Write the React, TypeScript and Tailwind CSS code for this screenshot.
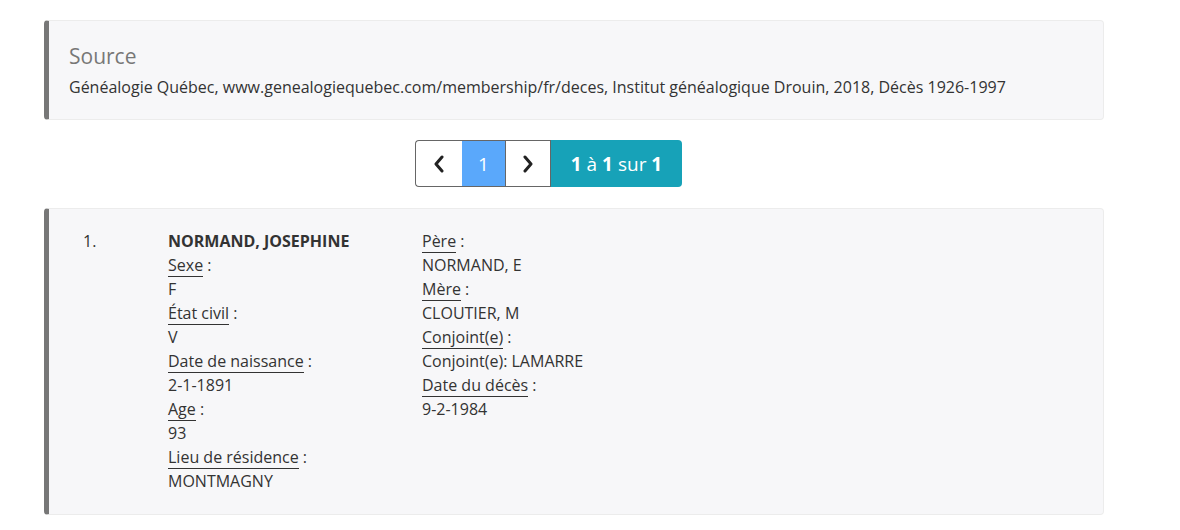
import React from "react";

const left = [
  { label: "Sexe", value: "F" },
  { label: "État civil", value: "V" },
  { label: "Date de naissance", value: "2-1-1891" },
  { label: "Age", value: "93" },
  { label: "Lieu de résidence", value: "MONTMAGNY" },
];

const right = [
  { label: "Père", value: "NORMAND, E" },
  { label: "Mère", value: "CLOUTIER, M" },
  { label: "Conjoint(e)", value: "Conjoint(e): LAMARRE" },
  { label: "Date du décès", value: "9-2-1984" },
];

function Field({ label, value }: { label: string; value: string }) {
  return (
    <>
      <div className="h-6">
        <span className="border-b border-[#333]">{label}</span> :
      </div>
      <div className="h-6">{value}</div>
    </>
  );
}

function Chevron({ dir }: { dir: "left" | "right" }) {
  return (
    <svg width="12" height="18" viewBox="0 0 12 18" fill="none">
      <path
        d={dir === "left" ? "M9 2 L3 9 L9 16" : "M3 2 L9 9 L3 16"}
        stroke="#222"
        strokeWidth="3"
        strokeLinecap="round"
        strokeLinejoin="round"
      />
    </svg>
  );
}

export default function App() {
  return (
    <div
      className="min-h-[530px] bg-white pt-5 text-[16px] leading-6 text-[#333]"
      style={{ fontFamily: '"Open Sans", sans-serif' }}
    >
      <div className="ml-[44px] w-[1060px] rounded border border-[#ececec] border-l-[5px] border-l-[#777] bg-[#f7f7f9] px-5 pt-[23px] pb-5">
        <h4 className="text-[21px] leading-[25px] text-[#777]">Source</h4>
        <p className="mt-1.5">
          Généalogie Québec, www.genealogiequebec.com/membership/fr/deces, Institut généalogique Drouin, 2018, Décès 1926-1997
        </p>
      </div>

      <div className="mt-5 ml-[415px] flex h-[47px] w-fit">
        <button className="flex w-[47px] items-center justify-center rounded-l border border-r-0 border-[#666] bg-white">
          <Chevron dir="left" />
        </button>
        <div className="flex w-[43px] items-center justify-center border-y border-[#666] bg-[#5aa8fb] text-[19px] text-white">
          1
        </div>
        <button className="flex w-[46px] items-center justify-center border border-[#666] bg-white">
          <Chevron dir="right" />
        </button>
        <div className="flex w-[131px] items-center justify-center rounded-r bg-[#17a2b8] text-[19px] text-white">
          <b>1</b>&nbsp;à&nbsp;<b>1</b>&nbsp;sur&nbsp;<b>1</b>
        </div>
      </div>

      <div className="mt-[21px] ml-[44px] w-[1060px] rounded border border-[#ececec] border-l-[5px] border-l-[#777] bg-[#f7f7f9] pt-5 pb-[21px]">
        <div className="flex">
          <div className="w-[119px] pl-[34px]">1.</div>
          <div className="w-[254px]">
            <div className="h-6 font-bold">NORMAND, JOSEPHINE</div>
            {left.map((f) => (
              <Field key={f.label} {...f} />
            ))}
          </div>
          <div>
            {right.map((f) => (
              <Field key={f.label} {...f} />
            ))}
          </div>
        </div>
      </div>
    </div>
  );
}
